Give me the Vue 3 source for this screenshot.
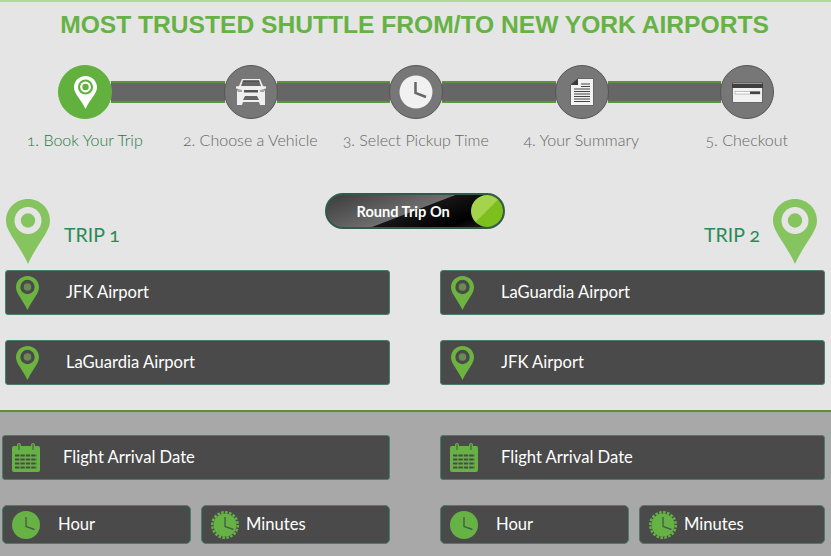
<template>
  <div class="pagina">
    <svg class="defs" width="0" height="0">
      <defs>
        <symbol id="relogio" viewBox="0 0 28 28">
          <circle cx="14" cy="14" r="14" fill="#66b244" />
          <path d="M14 6v9.500l8.500 3" fill="none" stroke="#47604a" stroke-width="1.400" />
        </symbol>
        <symbol id="cronometro" viewBox="0 0 28 28">
          <circle cx="14" cy="14" r="11.500" fill="#66b244" />
          <circle cx="14" cy="14" r="12.800" fill="none" stroke="#66b244" stroke-width="2.400" stroke-dasharray="2.600 1.400" />
          <path d="M14 6v9.500l8.500 3" fill="none" stroke="#47604a" stroke-width="1.400" />
        </symbol>
        <symbol id="calendario" viewBox="0 0 28 29">
          <rect x="0" y="3" width="28" height="26" rx="2" fill="#66b244" />
          <path d="M7 2v6M21 2v6" stroke="#66b244" stroke-width="4" stroke-linecap="round" />
          <path d="M7 1.500v5M21 1.500v5" stroke="#4a4a4a" stroke-width="1" stroke-linecap="round" />
          <path d="M3 12.500h22M3 16.500h22M3 20.500h22M3 24.500h22" stroke="#4a4a4a" stroke-width="2.200" stroke-dasharray="4.400 1" />
        </symbol>
      </defs>
    </svg>

    <section class="topo">
      <h1 class="titulo">MOST TRUSTED SHUTTLE FROM/TO NEW YORK AIRPORTS</h1>

      <div class="trilha">
        <template v-for="(etapa, i) in etapas" :key="etapa.nome">
          <div v-if="i > 0" class="barra"></div>
          <div class="bolinha" :class="{ ativa: i === 0 }">
            <svg v-if="i === 0" width="23" height="33" viewBox="0 0 23 33">
              <path d="M11.500 0C5 0 0 5 0 11.300 0 18 7 23 11.500 33 16 23 23 18 23 11.300 23 5 18 0 11.500 0z" fill="#fff" />
              <circle cx="11.500" cy="11" r="7.600" fill="#62b13f" />
              <circle cx="11.500" cy="11" r="5.400" fill="#fff" />
              <circle cx="11.500" cy="11" r="3.200" fill="#62b13f" />
            </svg>
            <svg v-else-if="i === 1" width="32" height="28" viewBox="0 0 32 28">
              <path d="M7 1h18l3 7 3 .5v2l-2 .5 1 3v13h-5l-1-3H8l-1 3H2V14l1-3-2-.5v-2L4 8z" fill="#efefef" />
              <path d="M8 2.500h16L26 8H6z" fill="#666" />
              <path d="M8 2.500h16l.4 1H7.600z" fill="#3f3f3f" />
              <path d="M9 12h14v2.500H9z" fill="#555" />
              <path d="M3 11l4 1v2H3zM29 11l-4 1v2h4z" fill="#a5a5a5" />
              <path d="M8 22l2-4h12l2 4z" fill="#666" />
            </svg>
            <svg v-else-if="i === 2" width="34" height="34" viewBox="0 0 34 34">
              <circle cx="17" cy="17" r="16.500" fill="#f1f1f1" />
              <path d="M16.500 7v11l10.500 4" fill="none" stroke="#666" stroke-width="2.500" />
            </svg>
            <svg v-else-if="i === 3" width="24" height="28" viewBox="0 0 24 28">
              <path d="M8 .5h15.500v27H.5V7z" fill="#f2f2f2" stroke="#666" />
              <path d="M8 .5V7H.5z" fill="#3a3a3a" />
              <path d="M4 11h16M4 13.500h16M4 16h16M4 18.500h16M4 21h16M4 23.500h16" stroke="#444" stroke-width="1.200" />
              <path d="M11 6h9M11 8.500h9" stroke="#444" stroke-width="1.200" />
            </svg>
            <svg v-else width="31" height="21" viewBox="0 0 31 21">
              <rect x=".5" y=".5" width="30" height="20" fill="#f1f1f1" stroke="#666" />
              <path d="M0 1.500h31V6H0z" fill="#3f3f3f" />
              <path d="M3 9.500h25v2.500H3z" fill="#fff" stroke="#999" stroke-width=".6" />
              <path d="M18 9.500h10V12H18z" fill="#444" />
            </svg>
          </div>
        </template>
      </div>

      <div class="etapas">
        <span v-for="(etapa, i) in etapas" :key="etapa.nome" class="etapa" :class="{ ativa: i === 0 }">{{ etapa.nome }}</span>
      </div>

      <div class="cabecalho">
        <div class="viagem">
          <svg class="pino" width="44" height="65" viewBox="0 0 44 65">
            <path d="M22 0C9.800 0 0 9.600 0 21.800 0 33 13 45 22 65c9-20 22-32 22-43.200C44 9.600 34.200 0 22 0z" fill="#85c45f" />
            <circle cx="22" cy="21.500" r="13.500" fill="#e5e5e5" />
            <circle cx="22" cy="21.500" r="7.200" fill="#85c45f" />
          </svg>
          <span class="nome-viagem nome-esq">TRIP 1</span>
        </div>

        <div class="chave">
          <span>Round Trip On</span>
          <i class="botao"></i>
        </div>

        <div class="viagem">
          <span class="nome-viagem nome-dir">TRIP 2</span>
          <svg class="pino" width="44" height="65" viewBox="0 0 44 65">
            <path d="M22 0C9.800 0 0 9.600 0 21.800 0 33 13 45 22 65c9-20 22-32 22-43.200C44 9.600 34.200 0 22 0z" fill="#85c45f" />
            <circle cx="22" cy="21.500" r="13.500" fill="#e5e5e5" />
            <circle cx="22" cy="21.500" r="7.200" fill="#85c45f" />
          </svg>
        </div>
      </div>

      <div class="aeroportos">
        <div v-for="coluna in aeroportos" :key="coluna[0]" class="coluna">
          <div v-for="nome in coluna" :key="nome" class="campo campo-aeroporto">
            <svg width="23" height="34" viewBox="0 0 23 34">
              <path d="M11.500 0C5 0 0 5 0 11.300 0 18 7 24 11.500 34 16 24 23 18 23 11.300 23 5 18 0 11.500 0z" fill="#6db33f" />
              <circle cx="11.500" cy="11" r="7.200" fill="#4a4a4a" />
              <circle cx="11.500" cy="11" r="3.800" fill="#6a8a55" />
            </svg>
            <span>{{ nome }}</span>
          </div>
        </div>
      </div>
    </section>

    <section class="base">
      <div v-for="lado in 2" :key="lado" class="coluna-base">
        <div class="campo campo-data">
          <svg width="28" height="29"><use href="#calendario" /></svg>
          <span>Flight Arrival Date</span>
        </div>
        <div class="linha-hora">
          <div class="campo campo-hora">
            <svg width="28" height="28"><use href="#relogio" /></svg>
            <span>Hour</span>
          </div>
          <div class="campo campo-minuto">
            <svg width="28" height="28"><use href="#cronometro" /></svg>
            <span>Minutes</span>
          </div>
        </div>
      </div>
    </section>
  </div>
</template>

<script setup>
const etapas = [
  { nome: '1. Book Your Trip' },
  { nome: '2. Choose a Vehicle' },
  { nome: '3. Select Pickup Time' },
  { nome: '4. Your Summary' },
  { nome: '5. Checkout' },
];

const aeroportos = [
  ['JFK Airport', 'LaGuardia Airport'],
  ['LaGuardia Airport', 'JFK Airport'],
];
</script>

<style>
html,
body {
  margin: 0;
  overflow: hidden;
}
</style>

<style scoped>
.pagina {
  width: 831px;
  height: 556px;
  overflow: hidden;
  font-family: Lato, "Open Sans", sans-serif;
}

.defs {
  position: absolute;
}

.topo {
  height: 410px;
  box-sizing: border-box;
  background-color: #e5e5e5;
  border-top: 2px solid #b3d99a;
}

.titulo {
  margin: 8px 0 0;
  padding-right: 2px;
  font-family: "Liberation Sans", Arial, sans-serif;
  font-size: 24.6px;
  line-height: 29px;
  font-weight: bold;
  text-align: center;
  color: #66b244;
}

.trilha {
  display: flex;
  align-items: center;
  margin-top: 26px;
  padding: 0 57px 0 58px;
}

.barra {
  flex: 1;
  height: 22px;
  box-sizing: border-box;
  margin: 0 -1px;
  background-color: #666;
  border-top: 2px solid #5a953c;
  border-bottom: 2px solid #5a953c;
}

.bolinha {
  position: relative;
  display: flex;
  align-items: center;
  justify-content: center;
  flex: none;
  width: 54px;
  height: 54px;
  box-sizing: border-box;
  border-radius: 50%;
  background-color: #777;
  border: 1px solid #555;
}

.bolinha.ativa {
  background-color: #62b13f;
  border-color: #62b13f;
}

.etapas {
  display: grid;
  grid-template-columns: repeat(5, 165.5px);
  margin: 12px 0 0 2px;
}

.etapa {
  text-align: center;
  font-size: 16px;
  line-height: 18px;
  font-weight: 300;
  color: #666;
  font-variant-numeric: oldstyle-nums;
  white-space: nowrap;
}

.etapa.ativa {
  color: #1c7a42;
}

.cabecalho {
  display: flex;
  justify-content: space-between;
  height: 71px;
  margin-top: 44px;
  padding: 0 14px 0 6px;
}

.viagem {
  display: flex;
  align-items: center;
  align-self: flex-end;
}

.pino {
  display: block;
}

.nome-viagem {
  margin-top: 5px;
  font-size: 19.5px;
  color: #2a8a55;
  font-variant-numeric: oldstyle-nums;
}

.nome-esq {
  margin-left: 14px;
}

.nome-dir {
  margin-right: 13px;
}

.chave {
  display: flex;
  align-items: center;
  justify-content: space-between;
  width: 180px;
  height: 36px;
  margin-left: 5px;
  box-sizing: border-box;
  padding: 0 0 0 30px;
  border: 2px solid #2f5b4b;
  border-radius: 18px;
  background: linear-gradient(159deg, #3c3c3c 0%, #6e6e6e 49%, #161616 50%, #000 78%, #2a2a2a 100%);
  color: #fff;
  font-size: 14.6px;
  font-weight: 700;
  align-self: flex-start;
}

.botao {
  width: 32px;
  height: 32px;
  border-radius: 50%;
  background: linear-gradient(135deg, #a4d34c 50%, #7dbf1c 50%);
}

.aeroportos {
  display: flex;
  justify-content: space-between;
  margin-top: 6px;
  padding: 0 6px 0 5px;
}

.coluna {
  display: flex;
  flex-direction: column;
  gap: 25px;
  width: 385px;
}

.campo {
  display: flex;
  align-items: center;
  box-sizing: border-box;
  background-color: #4a4a4a;
  border: 1px solid #46806a;
  border-radius: 3px;
  color: #fff;
  font-size: 16.6px;
}

.campo span {
  padding-bottom: 2px;
}

.campo-aeroporto {
  height: 45px;
  padding-left: 10px;
  gap: 27px;
}

.base {
  display: grid;
  grid-template-columns: 388px 385px;
  justify-content: space-between;
  height: 146px;
  box-sizing: border-box;
  padding: 23px 6px 0 2px;
  background-color: #a8a8a8;
  border-top: 2px solid #5d8c3a;
}

.coluna-base {
  display: flex;
  flex-direction: column;
  gap: 25px;
}

.campo-data {
  height: 45px;
  padding-left: 9px;
  gap: 23px;
}

.linha-hora {
  display: grid;
  grid-template-columns: 188.5px 1fr;
  gap: 10.5px;
}

.campo-hora,
.campo-minuto {
  height: 39px;
  border-radius: 5px;
  padding-left: 9px;
}

.campo-hora {
  gap: 18px;
}

.campo-minuto {
  gap: 7px;
}
</style>
